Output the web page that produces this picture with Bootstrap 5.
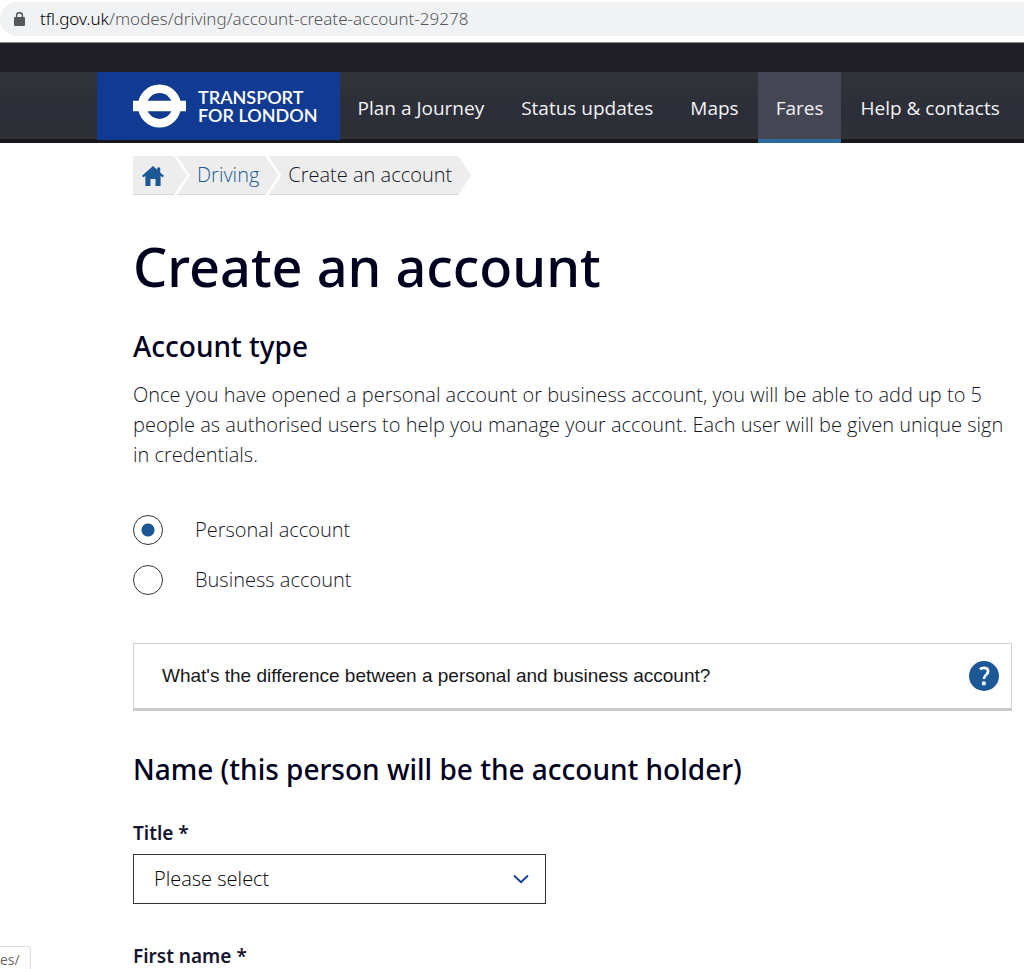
<!DOCTYPE html>
<html lang="en">
<head>
<meta charset="utf-8">
<meta name="viewport" content="width=device-width, initial-scale=1">
<title>Create an account - Transport for London</title>
<link href="https://cdn.jsdelivr.net/npm/bootstrap@5.3.0/dist/css/bootstrap.min.css" rel="stylesheet">
<style>
:root { --ink: #00001e; --text: #14161f; --blue: #1c5896; }
body { font: 300 20px/30px "Open Sans", "Noto Sans", sans-serif; color: var(--text); background: #fff; }
.address { height: 43px; padding: 2px 0 7px; border-bottom: 1px solid #8a8b8d; }
.address-pill { background: #f1f2f3; border-radius: 17px 0 0 17px; padding-left: 14px; gap: 15px; font: 300 17px/34px "Noto Sans", sans-serif; color: #55575a; }
.address-pill b { font-weight: 300; color: #000; }
.top-strip { height: 29px; background: #1f1f25; }
.site-nav { background: linear-gradient(#33343a, #2b2e38 60%, #303036); border-bottom: 4px solid #16181c; padding-left: 97px; }
.brand { background: #113b92; color: #fff; padding: 0 22px 0 36px; gap: 12px; font: 600 18px/18px Lato, sans-serif; text-decoration: none; height: 68px; margin-bottom: -1px; }
.site-nav .nav { gap: 1px; }
.site-nav .nav-link { color: #f3f3f5; font-weight: 400; font-size: 19px; line-height: 30px; padding: 21px 18px 16px; margin-bottom: -4px; border-bottom: 4px solid transparent; border-radius: 0; white-space: nowrap; }
.site-nav .nav-link.active { background: #454653; border-bottom-color: #2f6b9e; }
.page { padding: 13px 12px 40px 133px; }
.trail { margin: 0 0 41px; padding: 0; list-style: none; }
.trail li { height: 39px; background: #ededed; border-bottom: 1px solid #d8d8d8; padding: 4px 19px 4px 20px; margin-left: -10px; clip-path: polygon(0 0, calc(100% - 13px) 0, 100% 50%, calc(100% - 13px) 100%, 0 100%, 13px 50%); }
.trail li:first-child { margin-left: 0; padding: 6px 23px 4px 9px; clip-path: polygon(0 0, calc(100% - 13px) 0, 100% 50%, calc(100% - 13px) 100%, 0 100%); }
.trail a { color: #205a92; text-decoration: none; }
h1 { font: 500 54px/60px "Noto Sans", sans-serif; color: var(--ink); margin: 0 0 32px; }
h2 { font: 500 28px/36px "Noto Sans", sans-serif; color: var(--ink); margin: 0; }
.intro { margin: 16px 0 45px; }
.choices { gap: 20px; margin-bottom: 48px; }
.choices .form-check-input { float: none; width: 30px; height: 30px; margin: 0; border: 1px solid #33343a; flex: none; }
.choices .form-check-input:checked { background-color: #fff; background-image: radial-gradient(circle, var(--blue) 6px, transparent 7px); }
.help-box { border: 1px solid #d2d2d6; border-bottom: 3px solid #c9c9ca; background: #fff; padding: 17px 12px 17px 28px; margin-bottom: 40px; font: 400 19px/30px "Liberation Sans", Arial, sans-serif; color: #17181c; text-align: left; }
.field-label { display: block; font: 600 19px/30px "Noto Sans", sans-serif; color: #15152f; margin: 31px 0 6px; }
.field { width: 47%; height: 50px; border: 1px solid #333; border-radius: 0; font-size: 20px; font-weight: 300; line-height: 30px; color: #000; padding: 9px 40px 9px 20px; }
select.field { background-size: 16px 10px; background-position: right 16px center; background-image: url("data:image/svg+xml,%3Csvg xmlns='http://www.w3.org/2000/svg' viewBox='0 0 16 10'%3E%3Cpath d='M1 1.5 8 8.2 15 1.5' fill='none' stroke='%23113b92' stroke-width='1.8'/%3E%3C/svg%3E"); }
.field + .field-label { margin-top: 37px; }
.link-hint { position: absolute; left: 0; bottom: 0; width: 31px; height: 23px; background: #fff; border: 1px solid #dcdcdc; border-width: 1px 1px 0 0; border-radius: 0 4px 0 0; font: 400 14px/26px "Open Sans", sans-serif; color: #66686b; }
</style>
</head>
<body>
<div class="position-relative vh-100 overflow-hidden">
  <div class="address">
    <div class="address-pill d-flex align-items-center">
      <svg width="11" height="14" viewBox="0 0 11 14" aria-hidden="true"><rect y="5" width="11" height="9" rx="1.2" fill="#56585b"/><path d="M2.6 6V3.6a2.9 2.9 0 0 1 5.8 0V6" fill="none" stroke="#56585b" stroke-width="1.5"/></svg>
      <span><b>tfl.gov.uk</b>/modes/driving/account-create-account-29278</span>
    </div>
  </div>
  <header>
    <div class="top-strip"></div>
    <nav class="site-nav d-flex" aria-label="Main">
      <a class="brand d-flex align-items-center" href="#">
        <svg width="53" height="44" viewBox="0 0 53 44" aria-hidden="true"><circle cx="26.5" cy="22" r="17.2" fill="none" stroke="#fff" stroke-width="8.6"/><path d="M0 16.8h53v10.4H0z" fill="#fff"/></svg>
        <span>TRANSPORT<br>FOR LONDON</span>
      </a>
      <ul class="nav flex-nowrap">
        <li class="nav-item"><a class="nav-link" href="#">Plan a Journey</a></li>
        <li class="nav-item"><a class="nav-link" href="#">Status updates</a></li>
        <li class="nav-item"><a class="nav-link" href="#">Maps</a></li>
        <li class="nav-item"><a class="nav-link active" href="#" aria-current="page">Fares</a></li>
        <li class="nav-item"><a class="nav-link" href="#">Help &amp; contacts</a></li>
      </ul>
    </nav>
  </header>
  <main class="page">
    <nav aria-label="Breadcrumb">
      <ol class="trail d-flex">
        <li class="d-flex align-items-center"><a class="d-flex" href="#" aria-label="Home"><svg width="22" height="20" viewBox="0 0 22 20"><path d="M11 0 0 9.8l1.2 1.4L3.4 10v10h5.1v-7h5v7h5.1V10l2.2 1.2L22 9.8l-3.8-3.4V1.6h-3v2.1z" fill="#1c5896"/></svg></a></li>
        <li><a href="#">Driving</a></li>
        <li aria-current="page">Create an account</li>
      </ol>
    </nav>
    <h1>Create an account</h1>
    <form>
      <h2>Account type</h2>
      <p class="intro">Once you have opened a personal account or business account, you will be able to add up to 5 people as authorised users to help you manage your account. Each user will be given unique sign in credentials.</p>
      <div class="choices d-flex flex-column">
        <div class="d-flex"><input class="form-check-input" type="radio" name="kind" id="personal" checked><label class="ps-4 ms-2" for="personal">Personal account</label></div>
        <div class="d-flex"><input class="form-check-input" type="radio" name="kind" id="business"><label class="ps-4 ms-2" for="business">Business account</label></div>
      </div>
      <button class="help-box w-100 d-flex justify-content-between align-items-center" type="button">
        <span>What's the difference between a personal and business account?</span>
        <svg width="30" height="30" viewBox="0 0 30 30" aria-hidden="true"><circle cx="15" cy="15" r="15" fill="#1c5896"/><path d="M10.9 8.2Q13 6.7 15.3 6.8c2.4.1 3.8 1.5 3.8 3.5 0 3.5-4.2 3.7-4.2 7.6" fill="none" stroke="#fff" stroke-width="2.7"/><circle cx="14.9" cy="22.4" r="2.1" fill="#fff"/></svg>
      </button>
      <h2>Name (this person will be the account holder)</h2>
      <label class="field-label" for="title">Title *</label>
      <select class="form-select field" id="title"><option>Please select</option></select>
      <label class="field-label" for="first">First name *</label>
      <input class="form-control field" id="first" type="text">
    </form>
  </main>
  <div class="link-hint">es/</div>
</div>
<script src="https://cdn.jsdelivr.net/npm/bootstrap@5.3.0/dist/js/bootstrap.bundle.min.js"></script>
</body>
</html>
